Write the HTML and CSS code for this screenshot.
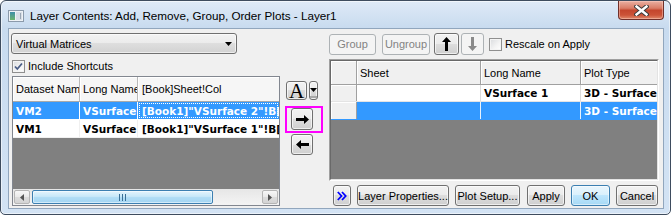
FILE: index.html
```html
<!DOCTYPE html>
<html>
<head>
<meta charset="utf-8">
<title>Layer Contents</title>
<link rel="stylesheet" href="styles.css">
</head>
<body>
<div class="window">
  <div class="titlebar">
    <svg class="appicon" width="16" height="12" viewBox="0 0 16 12">
      <defs>
        <linearGradient id="ig" x1="0" y1="0" x2="0" y2="1">
          <stop offset="0" stop-color="#3f8fa8"/>
          <stop offset="1" stop-color="#6cb46c"/>
        </linearGradient>
      </defs>
      <rect x="0.5" y="0.5" width="15" height="11" fill="#eef2f6" stroke="#8b9aab"/>
      <rect x="2" y="2" width="5" height="8" fill="url(#ig)"/>
      <rect x="8" y="2" width="6" height="8" fill="#d8dee6"/>
      <rect x="12" y="3" width="1" height="6" fill="#9aa6b4"/>
    </svg>
    <span class="title">Layer Contents: Add, Remove, Group, Order Plots - Layer1</span>
    <div class="close">
      <svg width="15" height="11" viewBox="0 0 15 11">
        <path d="M2.5,1.5 L12.5,9.5 M12.5,1.5 L2.5,9.5" stroke="#3b3b3b" stroke-width="4.4" stroke-linecap="square"/>
        <path d="M2.5,1.5 L12.5,9.5 M12.5,1.5 L2.5,9.5" stroke="#ffffff" stroke-width="2.4" stroke-linecap="square"/>
      </svg>
    </div>
  </div>

  <div class="client">
    <div class="left">
      <div class="combo">
        <span>Virtual Matrices</span>
        <svg class="combo-arrow" width="7" height="4" viewBox="0 0 7 4"><path d="M0,0 L7,0 L3.5,4 Z" fill="#000"/></svg>
      </div>
      <div class="check-row">
        <span class="checkbox">
          <svg width="11" height="11" viewBox="0 0 11 11"><path d="M2,5.5 L4.3,8 L9,2.5" fill="none" stroke="#4a5d86" stroke-width="1.8"/></svg>
        </span>
        <span class="check-label">Include Shortcuts</span>
      </div>
      <div class="lgrid">
        <div class="lrow lhead">
          <div class="lc lc1">Dataset Nam</div>
          <div class="lc lc2">Long Name</div>
          <div class="lc lc3">[Book]Sheet!Col</div>
        </div>
        <div class="lrow ldata sel">
          <div class="lc lc1">VM2</div>
          <div class="lc lc2">VSurface</div>
          <div class="lc lc3 focus">[Book1]"VSurface 2"!B[</div>
        </div>
        <div class="lrow ldata">
          <div class="lc lc1">VM1</div>
          <div class="lc lc2">VSurface</div>
          <div class="lc lc3">[Book1]"VSurface 1"!B[</div>
        </div>
        <div class="lempty"></div>
        <div class="hscroll">
          <div class="sbtn">
            <svg width="4" height="7" viewBox="0 0 4 7"><path d="M4,0 L0,3.5 L4,7 Z" fill="#555"/></svg>
          </div>
          <div class="thumb">
            <svg width="7" height="7" viewBox="0 0 7 7"><path d="M0.5,0 V7 M3.5,0 V7 M6.5,0 V7" stroke="#3a6f96" stroke-width="1"/></svg>
          </div>
          <div class="sbtn sbtn-r">
            <svg width="4" height="7" viewBox="0 0 4 7"><path d="M0,0 L4,3.5 L0,7 Z" fill="#555"/></svg>
          </div>
        </div>
      </div>
    </div>

    <div class="middle">
      <div class="font-row">
        <div class="btn fontbtn">A</div>
        <div class="btn ddbtn">
          <svg width="7" height="4" viewBox="0 0 7 4"><path d="M0,0 L7,0 L3.5,4 Z" fill="#000"/></svg>
          <span class="colorbar"></span>
        </div>
      </div>
      <div class="highlight">
        <div class="btn arrowbtn">
          <svg width="13" height="9" viewBox="0 0 13 9"><path d="M0,3 H8 V0 L13,4.5 L8,9 V6 H0 Z" fill="#000"/></svg>
        </div>
      </div>
      <div class="btn arrowbtn leftbtn">
        <svg width="13" height="9" viewBox="0 0 13 9"><path d="M13,3 H5 V0 L0,4.5 L5,9 V6 H13 Z" fill="#000"/></svg>
      </div>
    </div>

    <div class="right">
      <div class="toolbar">
        <div class="btn disabled b-group">Group</div>
        <div class="btn disabled b-ungroup">Ungroup</div>
        <div class="btn b-up">
          <svg width="9" height="14" viewBox="0 0 9 14"><path d="M4.5,0 L9,5 H6 V14 H3 V5 H0 Z" fill="#000"/></svg>
        </div>
        <div class="btn disabled b-down">
          <svg width="9" height="14" viewBox="0 0 9 14"><path d="M4.5,14 L9,9 H6 V0 H3 V9 H0 Z" fill="#8a8a8a"/></svg>
        </div>
        <span class="checkbox cb-rescale"></span>
        <span class="check-label">Rescale on Apply</span>
      </div>

      <div class="rgrid">
        <div class="rin">
          <div class="rrow rhead">
            <div class="rc rc0"></div>
            <div class="rc rc1">Sheet</div>
            <div class="rc rc2">Long Name</div>
            <div class="rc rc3">Plot Type</div>
          </div>
          <div class="rrow rdata">
            <div class="rc rc0"></div>
            <div class="rc rc1"></div>
            <div class="rc rc2">VSurface 1</div>
            <div class="rc rc3">3D - Surface</div>
          </div>
          <div class="rrow rdata sel r2">
            <div class="rc rc0"></div>
            <div class="rc rc1"></div>
            <div class="rc rc2"></div>
            <div class="rc rc3">3D - Surface</div>
          </div>
          <div class="rempty"></div>
        </div>
      </div>

      <div class="bottom">
        <div class="btn b-more">
          <svg width="10" height="10" viewBox="0 0 10 10"><path d="M0.8,1 L4.5,5 L0.8,9 M5,1 L8.7,5 L5,9" fill="none" stroke="#0000ff" stroke-width="1.8"/></svg>
        </div>
        <div class="btn b-layer">Layer Properties...</div>
        <div class="btn b-plot">Plot Setup...</div>
        <div class="btn b-apply">Apply</div>
        <div class="btn b-ok">OK</div>
        <div class="btn b-cancel">Cancel</div>
      </div>
    </div>
  </div>
</div>
</body>
</html>
```

FILE: styles.css
```css
* { box-sizing: border-box; }

html, body {
  margin: 0;
  padding: 0;
  background: #ffffff;
}

body {
  font-family: "Liberation Sans", Arial, sans-serif;
  font-size: 11px;
  color: #000;
}

.window {
  width: 671px;
  height: 215px;
  border: 1px solid #3e4c5e;
  border-radius: 6px 6px 5px 5px;
  background: linear-gradient(to bottom, #dfeaf7 0px, #c8dbef 27px, #d3e3f4 100%);
  box-shadow: inset 0 0 0 1px rgba(255, 255, 255, 0.55);
  display: flex;
  flex-direction: column;
  overflow: hidden;
}

/* title bar */
.titlebar {
  height: 27px;
  flex: none;
  display: flex;
  align-items: flex-start;
}

.appicon {
  margin: 9px 0 0 7px;
  flex: none;
}

.title {
  margin: 7px 0 0 6px;
  font-size: 11.7px;
  line-height: 16px;
  white-space: nowrap;
  color: #000;
}

.close {
  margin-left: auto;
  margin-right: 6px;
  width: 46px;
  height: 19px;
  border: 1px solid #70302a;
  border-top: none;
  border-radius: 0 0 4px 4px;
  background: linear-gradient(to bottom, #eab0a2 0%, #d97c66 40%, #c4462d 52%, #cc5338 78%, #e08a6c 100%);
  box-shadow: inset 0 0 0 1px rgba(255, 210, 200, 0.45);
  display: flex;
  align-items: center;
  justify-content: center;
}

/* client area */
.client {
  margin-left: 7px;
  width: 656px;
  height: 181px;
  border: 1px solid #91a6bd;
  background: #f0f0f0;
  display: flex;
  align-items: flex-start;
  padding: 4px 0 0 2px;
}

.left {
  width: 269px;
  flex: none;
  display: flex;
  flex-direction: column;
}

.combo {
  width: 226px;
  height: 21px;
  border: 1px solid #707070;
  border-radius: 3px;
  background: linear-gradient(to bottom, #f3f3f3 0%, #ebebeb 50%, #dedede 50%, #d2d2d2 100%);
  box-shadow: inset 0 0 0 1px rgba(255, 255, 255, 0.6);
  display: flex;
  align-items: center;
  padding-left: 4px;
}

.combo-arrow {
  margin-left: auto;
  margin-right: 4px;
}

.check-row {
  margin-top: 5px;
  height: 14px;
  display: flex;
  align-items: center;
  padding-left: 1px;
}

.checkbox {
  width: 13px;
  height: 13px;
  flex: none;
  border: 1px solid #8f8f8f;
  background: linear-gradient(135deg, #d9dbde 0%, #f4f4f4 60%, #ffffff 100%);
  box-shadow: inset 0 0 0 1px #f4f4f4;
  display: flex;
  align-items: center;
  justify-content: center;
}

.check-label {
  margin-left: 3px;
  white-space: nowrap;
}

/* left grid */
.lgrid {
  margin: 3px 0 0 1px;
  width: 268px;
  height: 130px;
  border: 1px solid #828790;
  background: #808080;
  display: flex;
  flex-direction: column;
}

.lrow {
  display: flex;
  flex: none;
}

.lhead {
  height: 25px;
  background: #f6f6f6;
  border-bottom: 1px solid #a9a9a9;
}

.lhead .lc {
  border-right: 1px solid #b9b9b9;
  box-shadow: inset 1px 1px 0 #ffffff;
}

.ldata {
  height: 18px;
  background: #ffffff;
  border-bottom: 1px solid #f0f0f0;
  font-family: "DejaVu Sans", Verdana, sans-serif;
  font-weight: bold;
  font-size: 10.5px;
}

.ldata .lc {
  border-right: 1px solid #f0f0f0;
}

.ldata.sel {
  background: #3399ff;
  color: #ffffff;
  border-bottom-color: #ffffff;
}

.ldata.sel .lc {
  border-right-color: #ffffff;
}

.lc {
  display: flex;
  align-items: center;
  overflow: hidden;
  white-space: nowrap;
  padding-left: 3px;
}

.lc1 { width: 67px; flex: none; }
.lc2 { width: 58px; flex: none; }
.lc3 { flex: 1; padding-left: 4px; border-right: none !important; }

.focus {
  outline: 1px dotted #ffffff;
  outline-offset: -2px;
}

.lempty {
  flex: 1;
}

.hscroll {
  height: 16px;
  flex: none;
  background: linear-gradient(to bottom, #e6e6e6, #f4f4f4);
  display: flex;
  align-items: center;
  padding: 0 1px;
}

.sbtn {
  width: 16px;
  height: 14px;
  border: 1px solid #b5b5b5;
  border-radius: 2px;
  background: linear-gradient(to bottom, #f7f7f7 0%, #e9e9e9 50%, #dcdcdc 50%, #d4d4d4 100%);
  display: flex;
  align-items: center;
  justify-content: center;
}

.thumb {
  margin-left: 2px;
  width: 181px;
  height: 14px;
  border: 1px solid #3c7fb1;
  border-radius: 2px;
  background: linear-gradient(to bottom, #e4f4fc 0%, #c8e8f9 45%, #b0dcf5 55%, #a4d6f3 100%);
  box-shadow: inset 0 0 0 1px rgba(255, 255, 255, 0.5);
  display: flex;
  align-items: center;
  justify-content: center;
}

.sbtn-r {
  margin-left: auto;
}

/* middle buttons */
.middle {
  width: 38px;
  flex: none;
  margin-left: 5px;
  padding-top: 48px;
  display: flex;
  flex-direction: column;
}

.btn {
  border: 1px solid #707070;
  border-radius: 3px;
  background: linear-gradient(to bottom, #f2f2f2 0%, #ebebeb 50%, #dddddd 50%, #cfcfcf 100%);
  box-shadow: inset 0 0 0 1px rgba(255, 255, 255, 0.65);
  display: flex;
  align-items: center;
  justify-content: center;
  white-space: nowrap;
  flex: none;
  color: #000;
}

.btn.disabled {
  border-color: #adb2b5;
  background: #f4f4f4;
  box-shadow: none;
  color: #838383;
}

.font-row {
  display: flex;
  margin-left: 1px;
}

.fontbtn {
  width: 21px;
  height: 19px;
  font-family: "Liberation Serif", "Times New Roman", serif;
  font-size: 21px;
  line-height: 19px;
  padding-top: 2px;
}

.ddbtn {
  margin-left: 2px;
  width: 9px;
  height: 19px;
  flex-direction: column;
  justify-content: flex-start;
  padding-top: 6px;
}

.colorbar {
  margin-top: 4px;
  width: 7px;
  height: 2px;
  background: #a8a8a8;
}

.highlight {
  margin-top: 6px;
  width: 38px;
  height: 27px;
  border: 2px solid #ff00ff;
  padding-left: 4px;
}

.arrowbtn {
  width: 22px;
  height: 22px;
}

.leftbtn {
  margin-top: 1px;
  margin-left: 6px;
  height: 21px;
}

/* right panel */
.right {
  margin-left: 6px;
  width: 330px;
  flex: none;
  display: flex;
  flex-direction: column;
}

.toolbar {
  height: 22px;
  display: flex;
  align-items: center;
}

.b-group { width: 47px; height: 21px; }
.b-ungroup { width: 48px; height: 21px; margin-left: 6px; }
.b-up { width: 25px; height: 22px; margin-left: 4px; }
.b-down { width: 23px; height: 22px; margin-left: 2px; }
.cb-rescale { margin-left: 5px; }

.rgrid {
  margin-top: 4px;
  width: 330px;
  height: 122px;
  border: 1px solid;
  border-color: #a0a0a0 #ffffff #ffffff #a0a0a0;
}

.rin {
  width: 100%;
  height: 100%;
  border: 1px solid;
  border-color: #696969 #e3e3e3 #e3e3e3 #696969;
  background: #808080;
  display: flex;
  flex-direction: column;
}

.rrow {
  display: flex;
  flex: none;
}

.rhead {
  height: 24px;
  background: #f0f0f0;
  border-bottom: 1px solid #a0a0a0;
}

.rhead .rc {
  border-right: 1px solid #a0a0a0;
  box-shadow: inset 1px 1px 0 #ffffff;
}

.rdata {
  height: 17px;
  background: #ffffff;
  font-family: "DejaVu Sans", Verdana, sans-serif;
  font-weight: bold;
  font-size: 10.5px;
  border-bottom: 1px solid #e4e4e4;
}

.rdata.r2 {
  height: 18px;
}

.rdata .rc {
  border-right: 1px solid #dcdcdc;
}

.rdata.sel {
  background: #3399ff;
  color: #ffffff;
  border-bottom-color: #3399ff;
}

.rdata.sel .rc {
  border-right-color: #e8f2fc;
}

.rdata .rc0 {
  background: #f0f0f0;
  border-right: 1px solid #a0a0a0 !important;
  box-shadow: inset 1px 1px 0 #ffffff;
}

.rc {
  display: flex;
  align-items: center;
  overflow: hidden;
  white-space: nowrap;
  padding-left: 3px;
  flex: none;
}

.rc0 { width: 26px; }
.rc1 { width: 124px; }
.rc2 { width: 100px; }
.rc3 { width: 76px; border-right: none !important; padding-left: 3px; }

.rempty {
  flex: 1;
}

.bottom {
  margin-top: 4px;
  height: 21px;
  display: flex;
  align-items: center;
}

.bottom .btn { height: 21px; }

.b-more { width: 18px; margin-left: 4px; }
.b-layer { width: 92px; margin-left: 6px; }
.b-plot { width: 65px; margin-left: 6px; }
.b-apply { width: 38px; margin-left: 7px; }
.b-ok {
  width: 39px;
  margin-left: 6px;
  border-color: #3c7fb1;
  background: linear-gradient(to bottom, #eaf6fd 0%, #d9f0fc 50%, #bee6fd 50%, #a7d9f5 100%);
  box-shadow: inset 0 0 0 1px rgba(255, 255, 255, 0.5);
}
.b-cancel { width: 42px; margin-left: 6px; }
```
